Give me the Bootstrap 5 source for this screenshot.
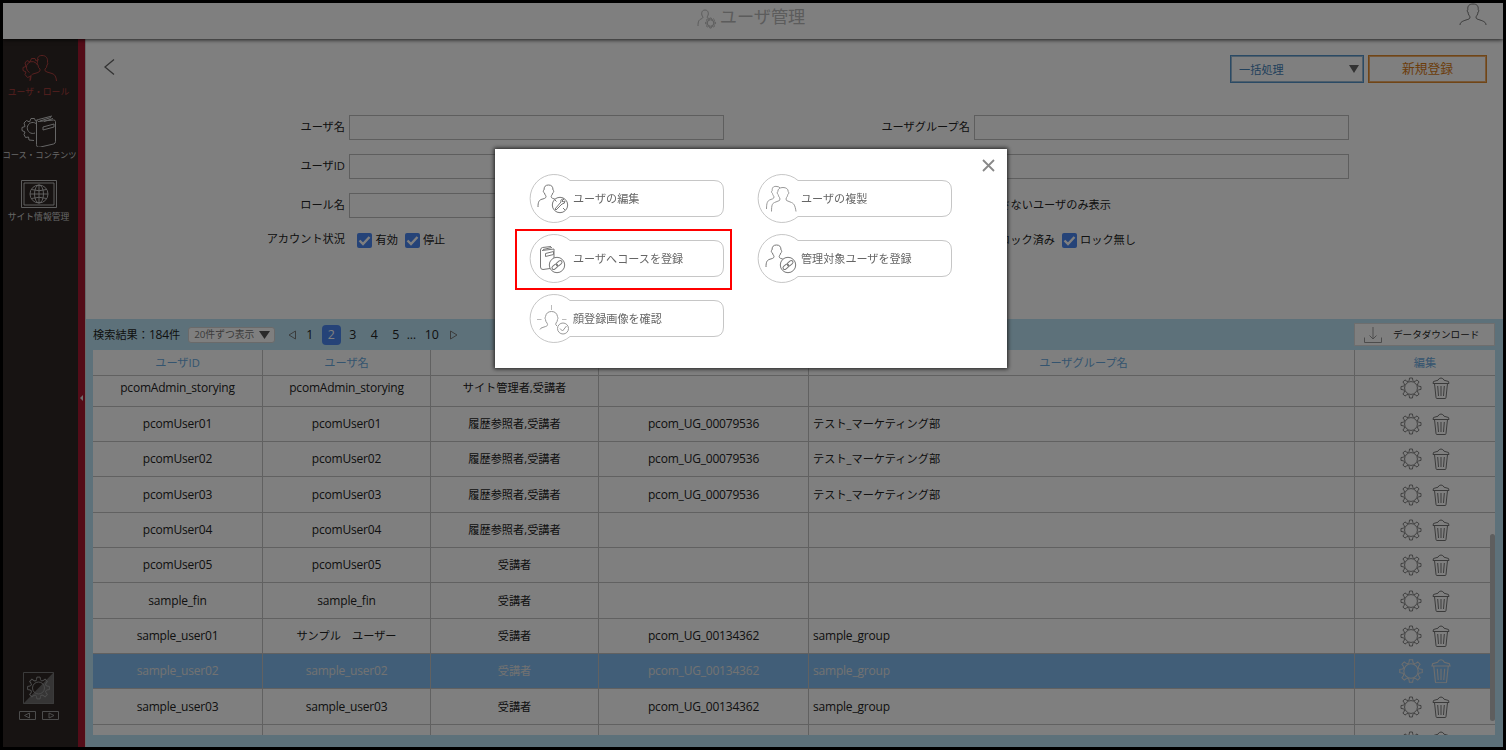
<!DOCTYPE html>
<html lang="ja">
<head>
<meta charset="utf-8">
<title>ユーザ管理</title>
<link href="https://cdn.jsdelivr.net/npm/bootstrap@5.3.0/dist/css/bootstrap.min.css" rel="stylesheet">
<script src="https://cdn.jsdelivr.net/npm/bootstrap@5.3.0/dist/js/bootstrap.bundle.min.js"></script>
<style>
body{width:1506px;height:750px;overflow:hidden;font:11.2px/16px "Open Sans","Noto Sans CJK JP",sans-serif;color:#222;background:#000}
svg{fill:none;display:block;flex:none}
svg:not([stroke]){stroke:currentColor}
.lt{font-size:12px;letter-spacing:-.2px}
.app{width:1506px;height:750px;border:3px solid #000;background:#fff}
.topbar{height:36px;box-shadow:0 1px 4px rgba(0,0,0,.75);z-index:2;color:#b8b8b8}
.topbar h1{font-size:17.2px;line-height:28px;margin:0}
.side{width:75px;background:#2e2624;color:#ccc;padding-right:4px}
.side a{color:inherit;text-decoration:none;white-space:nowrap;font-size:8.8px}
.side a.cur{color:#b0403f}
.strip{width:8px;background:#a81830;border-right:1px solid #d2d2d2;color:#ddd}
.sel{border:1px solid #5594cb;outline:1px solid #9dbcd6;outline-offset:-2px;color:#4482b8;width:134px;height:28px}
.new{border:1px solid #e08a2c;outline:1px solid #eeb070;outline-offset:-2px;color:#d87a14;width:119px;height:28px;font-size:12.8px;padding-bottom:2px}
.fgrid{display:grid;grid-template-columns:263px 375px 250px 375px;grid-template-rows:25px 25px 25px 16px;row-gap:14px;align-items:center}
.fgrid label{text-align:right;padding:0 4px 2px 0;white-space:nowrap}
.inp{height:25px;border:1px solid #bcbcbc;width:375px}
.ck{width:15px;height:15px;background:#4a86f0;border-radius:2px;color:#fff;stroke-width:2.4}
.lower{background:#bbe3f5;height:428px;padding:0 8px 0 7px}
.perpage{width:87px;height:16px;border:1px solid #d4d4d4;border-radius:3px;background:#fff;color:#777;font-size:9.8px;white-space:nowrap}
.pg{width:19.5px;height:20px;border-radius:4px;line-height:20px;text-align:center;font-size:12.4px}
.pg.on{background:#4a86f0;color:#fff}
.dl{width:141px;height:23px;background:#fff;border:1px solid #ddd}
.tbl{height:386px;background:#fff;overflow:hidden}
.r{display:grid;grid-template-columns:170px 168px 168px 210px 546px 140px;height:35.35px;flex:none}
.r>div{border-bottom:1px solid #c2c2c2;border-right:1px solid #c2c2c2;display:flex;align-items:center;justify-content:center}
.r>div:last-child{border-right:0}
.r>.grp{justify-content:flex-start;padding-left:4px}
.r.hd{height:27px;color:#69a9de;background:#fff;z-index:1;position:relative}
.r.hd>.grp{justify-content:center}
.r.picked{background:#82bdf0;color:#e4e4e4}
.r.picked svg{transform:scale(1.12);color:#ddd}
.r svg{color:#777}
.bar{right:0;top:184px;width:5px;height:187px;border-radius:3px;background:#bcbcbc}
.veil{background:rgba(0,0,0,.5);z-index:5}
.dlg{width:512px;height:218.5px;margin:149px auto 0 495px;background:#fff;box-shadow:0 0 4px 1px #222;color:#666}
.acts{display:grid;grid-template-columns:195px 195px;column-gap:33px;row-gap:12px;padding:25px 0 0 34px}
.act{width:195px;height:48px;padding:2px 0 0 44px;font-size:11.1px}
.act svg{position:absolute;left:0;top:0;color:#777}
.ring{left:20px;top:80px;width:217px;height:61px;border:2px solid #f00}
</style>
</head>
<body>
<svg width="0" height="0" class="position-absolute">
 <defs>
 <g id="tooth"><path d="M10.04 3.52 10.4 1.1h3.2l.36 2.42a1.8 1.8 0 0 0 2.65 1.1"/></g>
 <g id="teeth"><use href="#tooth"/><use href="#tooth" transform="rotate(45 12 12)"/><use href="#tooth" transform="rotate(90 12 12)"/><use href="#tooth" transform="rotate(135 12 12)"/><use href="#tooth" transform="rotate(180 12 12)"/><use href="#tooth" transform="rotate(225 12 12)"/><use href="#tooth" transform="rotate(270 12 12)"/><use href="#tooth" transform="rotate(315 12 12)"/></g>
 <g id="gear"><use href="#teeth"/><circle cx="12" cy="12" r="7"/></g>
 <g id="trash"><path d="M1 6.500 1.500 4.500 6 3.200Q7 1 9 1t3 2.200l4.500 1.300.5 2zM2.500 6.500 4 20.500q0 1 1 1h8q1 0 1-1L15.500 6.500M5.700 9l.8 10M9 9v10M12.300 9l-.8 10"/></g>
 <path id="man" d="M1 23c0-5 1-6.500 3-7.500 3-1 5-1 5-3 0-1-1.500-2-1.500-3.500C6 8.500 6 6.500 7 6 7 2.500 8.500 1 11.500 1S16 2.500 16 6c1 .5 1 2.500-.3 3 0 1.500-1.500 2.500-1.500 3.500 0 2 2 2 5 3"/>
 <path id="pill" d="M41 6.500H185q9.500 0 9.500 9.500v17q0 9.500-9.500 9.500H41A24 24 0 1 1 41 6.500Z" stroke="#c6c6c6"/>
 <g id="link"><circle cx="29" cy="31" r="7.700" fill="#fff"/><g transform="rotate(-40 29 31)"><rect x="23" y="29.300" width="6.500" height="3.400" rx="1.700"/><rect x="28.500" y="29.300" width="6.500" height="3.400" rx="1.700"/></g></g>
 </defs>
</svg>

<div class="app d-flex flex-column">
 <header class="topbar position-relative d-flex justify-content-center">
  <div class="d-flex" style="gap:3px;margin-right:4px">
   <svg class="mt-1" width="20" height="22" viewBox="0 0 20 22"><path d="M1 19c0-5 1-6 3-7 1-.5 2-1 2-2C4 8 4 3 8 3s4 5 2 7c0 1 1 1 2 1.500"/><g transform="translate(8 10.500) scale(.46)" stroke-width="2"><use href="#gear"/></g></svg>
   <h1 class="fw-normal">ユーザ管理</h1>
  </div>
  <svg class="position-absolute" style="right:16px;top:0" width="28" height="24" viewBox="0 0 28 24" stroke="#777"><path d="M1 22c0-3 3-4 6-5 3-1 4-1 4-3 0-1-2-2-2-5-1 0-1-2-.2-2.500C8.500 3 10 1 14 1s5.500 2 5.200 5.500C20 7 20 9 19 9c0 3-2 4-2 5 0 2 1 2 4 3 3 1 6 2 6 5"/></svg>
 </header>

 <div class="d-flex flex-grow-1">
  <nav class="side d-flex flex-column align-items-center">
   <a class="cur d-flex flex-column align-items-center" style="margin-top:15px" href="#">
    <svg width="37" height="29" viewBox="0 0 37 29"><path d="M10.500 26 11 22 7.500 23.500 5 20.500l1-2.500-3-1.500 0-3 3-1-1-3.500 2-2.500 3 1.500 1.500-3.500h3.500l1 2.500 3-1.500M9.500 18.500a5.800 5.800 0 1 1 8-7.500M10 27c0-5 1-6 3-7l5-1.500q3-1.500 2-3.500-2-1-2-4-1.500-1-.5-2.500C17 4 18 1.500 22 1.500S28 4 27.500 8.500q1 1.500-.5 2.500 0 3-2 4-1 2 2 3l5 1.500q4 1 4.500 7.500"/></svg>
    <span style="margin-top:1px">ユーザ・ロール</span></a>
   <a class="d-flex flex-column align-items-center" style="margin-top:15px" href="#">
    <svg width="37" height="32" viewBox="0 0 37 32"><path d="M14 25.500 9 25l-.5-3-3 .5L4 19.500l1-2.500-3-1.500v-3l3-1-1-3.500 2.500-2.500 3 1.500L11 3.500h3.500l1 2.500 2-1.500M15 18a5.500 5.500 0 1 1 1-9.500M18 6.500l15.500-1.500q2 0 2 1.500v20q0 2-2 2.500l-13 3q-4 1-4-2.500V7q0-2 2-2.500L32 1M20 6l11-3.500M24 6.500l9-3M23 12l11-3v3l-11 3z"/></svg>
    <span style="margin:0 0 0 2px;font-size:8.3px">コース・コンテンツ</span></a>
   <a class="d-flex flex-column align-items-center" style="margin-top:17px" href="#">
    <svg width="36" height="28" viewBox="0 0 36 28" stroke-width=".9"><path d="M.5.500h35v27H.5zM3 3h30v22H3z"/><circle cx="18" cy="14" r="9"/><ellipse cx="18" cy="14" rx="4.500" ry="9"/><path d="M18 5v18M9 14h18M10.500 9.500q7.500 2.500 15 0M10.500 18.500q7.500-2.500 15 0"/></svg>
    <span style="margin-top:1px">サイト情報管理</span></a>
   <div class="mt-auto d-flex flex-column align-items-center" style="margin-bottom:27px;color:#777">
    <svg width="31" height="32" viewBox="0 0 31 32"><path d="M31 0v32H0z" fill="#777" fill-opacity=".85" stroke="none"/><path d="M.5.500h30v31H.5z"/><g transform="translate(3.500 4)" stroke="#999"><use href="#teeth"/><circle cx="12" cy="12" r="6"/></g></svg>
    <svg style="margin-top:7px" width="40" height="9" viewBox="0 0 40 9" stroke="#999"><path d="M.5.500h16v8H.5zM23.500.500h16v8h-16zM10.500 2v5l-5-2.500zM30 2v5l5-2.500z"/></svg>
   </div>
  </nav>
  <div class="strip d-flex align-items-center" style="padding-top:9px"><svg width="7" height="8" viewBox="0 0 7 8"><path d="M5 1v6L2 4z" fill="#ddd" stroke="none"/></svg></div>

  <main class="flex-grow-1 d-flex flex-column">
   <section class="flex-grow-1">
    <div class="d-flex justify-content-between" style="padding:16px 16px 0 17px">
     <svg style="margin-top:3px" width="13" height="18" viewBox="0 0 13 18" stroke="#666"><path d="M11 1.500 2 9l9 7.500" stroke-width="1.300"/></svg>
     <div class="d-flex gap-1">
      <div class="sel d-flex justify-content-between align-items-center ps-2 pe-1"><span style="padding-top:2px">一括処理</span><svg width="10" height="8"><path d="M0 0h10L5 8z" fill="#666" stroke="none"/></svg></div>
      <div class="new d-flex align-items-center justify-content-center">新規登録</div>
     </div>
    </div>
    <div class="fgrid" style="margin-top:32px">
     <label>ユーザ名</label><div class="inp"></div><label>ユーザグループ名</label><div class="inp"></div>
     <label>ユーザID</label><div class="inp"></div><label></label><div class="inp"></div>
     <label>ロール名</label><div class="inp"></div><label></label><div class="text-end" style="width:137px;padding-bottom:2px">さないユーザのみ表示</div>
     <label>アカウント状況</label>
     <div class="d-flex align-items-center" style="padding-left:7.5px"><svg class="ck" viewBox="0 0 15 15"><path d="m2.500 7.500 3.500 3.500 6.500-7"/></svg><span class="ms-1">有効</span><svg class="ck" style="margin-left:7px" viewBox="0 0 15 15"><path d="m2.500 7.500 3.500 3.500 6.500-7"/></svg><span style="margin-left:3px">停止</span></div>
     <label></label>
     <div class="d-flex align-items-center justify-content-end" style="width:162px"><span>ロック済み</span><svg class="ck" style="margin-left:7px" viewBox="0 0 15 15"><path d="m2.500 7.500 3.500 3.500 6.500-7"/></svg><span style="margin-left:3px">ロック無し</span></div>
    </div>
   </section>

   <section class="lower">
    <div class="d-flex align-items-center" style="height:31px">
     <span>検索結果：<span class="lt">184</span>件</span>
     <div class="perpage d-flex align-items-center justify-content-between ms-2" style="padding:0 4px 0 5px"><span>20件ずつ表示</span><svg width="11" height="8"><path d="M0 0h11L5.500 8z" fill="#555" stroke="none"/></svg></div>
     <svg style="margin-left:13px" width="8" height="10" viewBox="0 0 8 10" stroke="#777"><path d="M7.500 1v8L1 5z"/></svg>
     <div class="d-flex align-items-center" style="margin-left:4px;gap:2px"><span class="pg">1</span><span class="pg on">2</span><span class="pg">3</span><span class="pg">4</span><span class="pg">5</span></div>
     <span class="lt" style="margin-left:1px">…</span><span class="lt" style="margin-left:9px;font-size:12.4px;letter-spacing:0">10</span>
     <svg style="margin-left:11px" width="8" height="10" viewBox="0 0 8 10" stroke="#777"><path d="M.5 1v8L7 5z"/></svg>
     <div class="dl d-flex align-items-center ms-auto"><svg style="margin-left:9px" width="18" height="18" viewBox="0 0 18 18" stroke="#999"><path d="M9 1v12M5.500 9.500 9 13l3.500-3.500M.5 11.500v5h17v-5"/></svg><span style="margin-left:11px;font-size:9.6px">データダウンロード</span></div>
    </div>
    <div class="tbl position-relative d-flex flex-column" style="height:385px">
     <div class="r hd" style="height:26px"><div>ユーザID</div><div>ユーザ名</div><div></div><div></div><div class="grp">ユーザグループ名</div><div>編集</div></div>
     <div id="rows" style="margin-top:-4.700px"></div>
     <div class="bar position-absolute"></div>
    </div>
   </section>
  </main>
 </div>
</div>

<div class="veil position-fixed top-0 start-0 w-100 h-100">
 <div class="dlg position-relative">
  <svg class="position-absolute" style="right:12px;top:10px" width="13" height="13" viewBox="0 0 13 13" stroke="#888" stroke-width="1.800"><path d="m1 1 11 11M12 1 1 12"/></svg>
  <div class="acts">
   <div class="act position-relative d-flex align-items-center"><svg width="195" height="49"><use href="#pill"/><use href="#man" x="8" y="10"/><circle cx="31" cy="31" r="7.700" fill="#fff"/><path d="m26 35 6-7q-1-3 3-3l-2 2 1 1 2-1q0 3-3 3l-6 6zM25.500 25.500l2 2M34 34l2 2"/></svg>ユーザの編集</div>
   <div class="act position-relative d-flex align-items-center"><svg width="195" height="49"><use href="#pill"/><g stroke="#999"><path d="M9.500 35c0-6 1-8 3-9 2-1 4.500-1 4.500-3 0-1-1.500-2-1.500-3.500-1.500-1-1-2.500-.3-3C15 13 17 12 20 12.500q2 0 3 1.500M14.500 37.500c0-7 1-8 3-9l5-2q1-1.500 0-3c-1-1-1-2-1.300-3-1.500-.8-1-2.500-.4-3 0-2.500 2-4 5.200-4s5.200 1.500 5.200 4c.6.5 1 2.200-.4 3-.3 1-.3 2-1.300 3q-1 1.500 0 3l5 2c2 1 3.500 2 4.500 9"/></g></svg>ユーザの複製</div>
   <div class="act position-relative d-flex align-items-center"><svg width="195" height="49"><use href="#pill"/><path d="M21 34.500l-7 1q-2.500 0-2.500-2.500V16q0-2 2-2.500L22 12.500M13 16.500l12-1.500v9M14 15.500l9-2M16.500 19.500l8-2v3l-8 2z"/><use href="#link" x="-1" y="0"/></svg>ユーザへコースを登録</div>
   <div class="act position-relative d-flex align-items-center"><svg width="195" height="49"><use href="#pill"/><use href="#man" x="8" y="10"/><use href="#link" x="2"/></svg>管理対象ユーザを登録</div>
   <div class="act position-relative d-flex align-items-center"><svg width="195" height="49"><use href="#pill"/><g stroke="#999"><path d="M22.500 11v5M8 25.500h4.500M33 25.500h4.500" stroke="#bbb"/><path d="M11 35.500q0-1.500 4-2.500c4-1 4-2 3-4q-1.500-1.500-1.500-3.500c-1-1 0-2.500 0-3q1-5 6-5t6 5c0 .5 1 2 0 3q0 2-1.500 3.500-1 2 1 3"/><circle cx="34" cy="34.500" r="5.500" fill="#fff"/><path d="m31 34.500 2.500 2.500 4-5"/></g></svg>顔登録画像を確認</div>
  </div>
  <div class="ring position-absolute"></div>
 </div>
</div>

<script>
const A='履歴参照者,受講者', B='受講者', M='テスト_マーケティング部', U='pcom_UG_00079536', S='pcom_UG_00134362';
const data=[
 ['pcomAdmin_storying','pcomAdmin_storying','サイト管理者,受講者','',''],
 ['pcomUser01','pcomUser01',A,U,M],['pcomUser02','pcomUser02',A,U,M],['pcomUser03','pcomUser03',A,U,M],
 ['pcomUser04','pcomUser04',A,'',''],['pcomUser05','pcomUser05',B,'',''],['sample_fin','sample_fin',B,'',''],
 ['sample_user01','サンプル　ユーザー',B,S,'sample_group'],['sample_user02','sample_user02',B,S,'sample_group'],
 ['sample_user03','sample_user03',B,S,'sample_group'],['','','','','']];
const latin=t=>/^[\x20-\x7e]+$/.test(t)?'lt ':'';
document.getElementById('rows').innerHTML=data.map((d,i)=>
 `<div class="r${i===8?' picked':''}">`+d.map((t,c)=>`<div class="${latin(t)}${c===4?'grp':''}">${t}</div>`).join('')+
 `<div><svg width="22" height="22" viewBox="0 0 24 24"><use href="#gear"/></svg><svg style="margin-left:10px;margin-right:1px" width="18" height="22"><use href="#trash"/></svg></div></div>`).join('');
</script>
</body>
</html>
